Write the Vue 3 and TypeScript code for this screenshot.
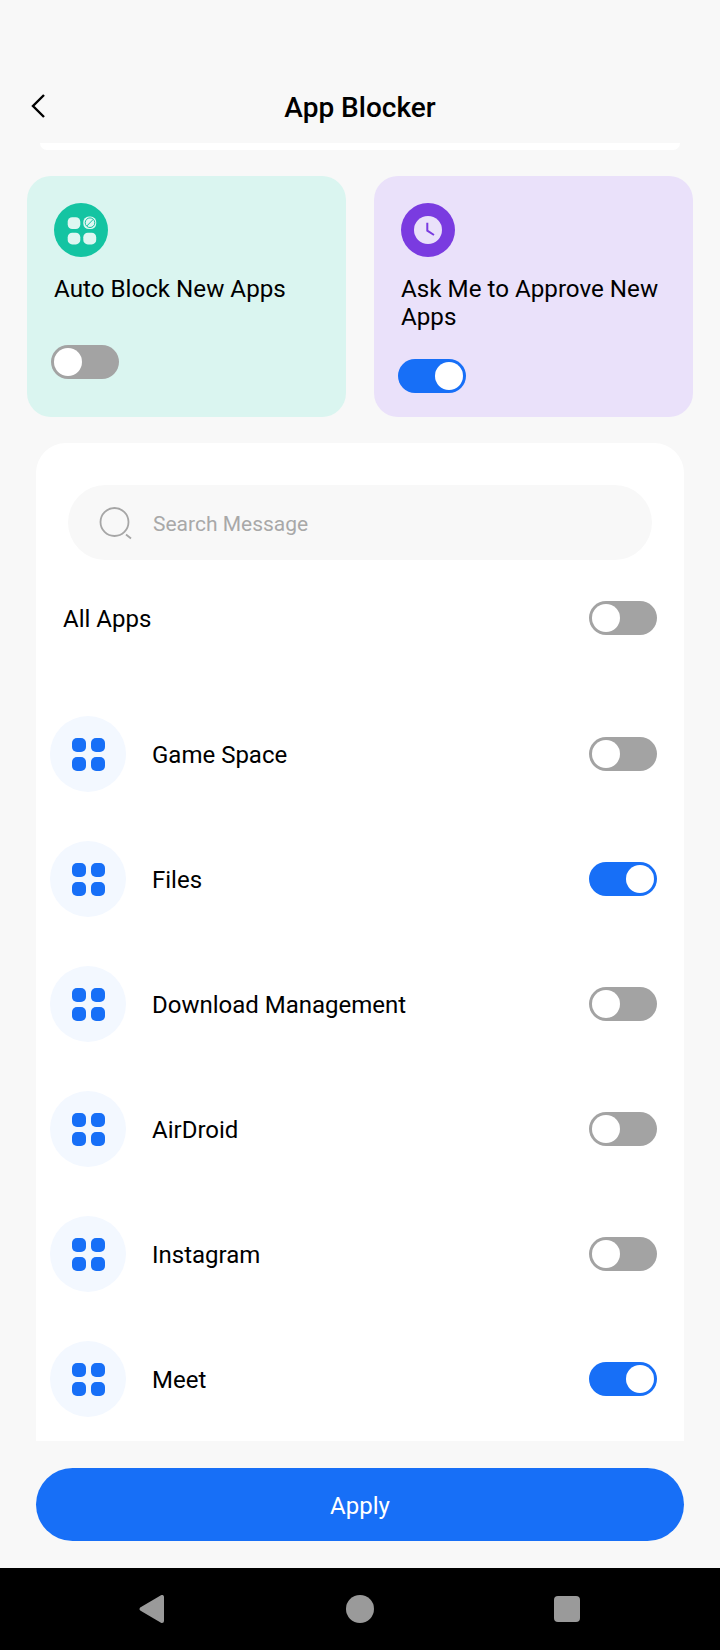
<script setup lang="ts">
import { ref } from 'vue'

interface AppRow {
  name: string
  on: boolean
}

const autoBlock = ref(false)
const askApprove = ref(true)
const allApps = ref(false)

const apps = ref<AppRow[]>([
  { name: 'Game Space', on: false },
  { name: 'Files', on: true },
  { name: 'Download Management', on: false },
  { name: 'AirDroid', on: false },
  { name: 'Instagram', on: false },
  { name: 'Meet', on: true }
])
</script>

<template>
  <div class="page">
    <header class="top-bar">
      <svg class="back" width="16" height="26" viewBox="0 0 16 26">
        <path d="M14 2 L3 13 L14 24" fill="none" stroke="#000" stroke-width="2.4" />
      </svg>
      <h1 class="title">App Blocker</h1>
    </header>
    <div class="strip"></div>

    <section class="cards">
      <div class="card card-green">
        <div class="badge badge-green">
          <svg width="34" height="34" viewBox="0 0 34 34">
            <rect x="3.7" y="4.3" width="12.6" height="11.7" rx="4.5" fill="#dff7f2" />
            <rect x="19.3" y="3.6" width="12.9" height="12.4" rx="5.5" fill="#dff7f2" />
            <rect x="3.7" y="19.7" width="12.6" height="11.7" rx="4.5" fill="#dff7f2" />
            <rect x="19.3" y="19.7" width="12.9" height="11.7" rx="4.5" fill="#dff7f2" />
            <circle cx="26" cy="9.7" r="4.8" fill="none" stroke="#14c4a2" stroke-width="1" />
            <path d="M22.8 13 L29.2 6.4" stroke="#14c4a2" stroke-width="1" />
          </svg>
        </div>
        <p class="card-text">Auto Block New Apps</p>
        <span class="toggle card-toggle" :class="{ on: autoBlock }"><i></i></span>
      </div>
      <div class="card card-purple">
        <div class="badge badge-purple">
          <svg width="28" height="28" viewBox="0 0 28 28">
            <circle cx="14" cy="14" r="14" fill="#eae1fa" />
            <path d="M13.3 6.7 V14.7 L20 19" fill="none" stroke="#7a3be0" stroke-width="2" />
          </svg>
        </div>
        <p class="card-text">Ask Me to Approve New Apps</p>
        <span class="toggle card-toggle" :class="{ on: askApprove }"><i></i></span>
      </div>
    </section>

    <section class="list">
      <div class="search">
        <svg width="36" height="36" viewBox="0 0 36 36">
          <circle cx="15.5" cy="17" r="14" fill="none" stroke="#a6a6a6" stroke-width="1.8" />
          <path d="M27 29.5 L32 33.5" stroke="#a6a6a6" stroke-width="1.8" />
        </svg>
        <span class="placeholder">Search Message</span>
      </div>

      <div class="all-row">
        <span class="row-name">All Apps</span>
        <span class="toggle" :class="{ on: allApps }"><i></i></span>
      </div>

      <div class="rows">
        <div v-for="app in apps" :key="app.name" class="app-row">
          <div class="app-icon">
            <span></span><span></span><span></span><span></span>
          </div>
          <span class="row-name app-name">{{ app.name }}</span>
          <span class="toggle" :class="{ on: app.on }"><i></i></span>
        </div>
      </div>
    </section>

    <button class="apply">Apply</button>

    <nav class="nav-bar">
      <svg width="26" height="30" viewBox="0 0 26 30">
        <path d="M23 2 V26 L2.6 14 Z" fill="#9a9a9a" stroke="#9a9a9a" stroke-width="4" stroke-linejoin="round" />
      </svg>
      <div class="nav-home"></div>
      <div class="nav-recent"></div>
    </nav>
  </div>
</template>

<style>
html,
body {
  margin: 0;
  background: #f8f8f8;
}
</style>

<style scoped>
.page {
  display: flex;
  flex-direction: column;
  width: 720px;
  height: 1650px;
  overflow: hidden;
  background: #f8f8f8;
  font-family: Roboto, "Liberation Sans", sans-serif;
  color: #000;
}

.top-bar {
  position: relative;
  display: flex;
  align-items: center;
  justify-content: center;
  height: 72px;
  padding-top: 71px;
  flex-shrink: 0;
}

.back {
  position: absolute;
  left: 30px;
  top: 93px;
}

.title {
  margin: 0;
  font-size: 28px;
  font-weight: 500;
}

.strip {
  height: 7px;
  margin: 0 40px;
  background: #fff;
  border-radius: 0 0 20px 20px;
  flex-shrink: 0;
}

.cards {
  display: grid;
  grid-template-columns: 319px 319px;
  gap: 28px;
  margin: 26px 0 0 27px;
}

.card {
  display: flex;
  flex-direction: column;
  align-items: flex-start;
  height: 241px;
  box-sizing: border-box;
  padding: 27px 27px 0;
  border-radius: 24px;
}

.card-green {
  background: #daf5f0;
}

.card-purple {
  background: #eae1fa;
}

.badge {
  display: flex;
  align-items: center;
  justify-content: center;
  width: 54px;
  height: 54px;
  border-radius: 50%;
}

.badge-green {
  background: #14c4a2;
}

.badge-purple {
  background: #7a3be0;
}

.card-text {
  margin: 18px 0 0;
  font-size: 24.2px;
  line-height: 28px;
}

.card-green .card-toggle {
  margin-top: 42px;
}

.card-purple .card-toggle {
  margin-top: 28px;
}

.card-toggle {
  margin-left: -3px;
}

.toggle {
  display: flex;
  flex-shrink: 0;
  box-sizing: border-box;
  width: 68px;
  height: 34px;
  padding: 3px;
  border-radius: 17px;
  background: #a3a3a3;
}

.toggle i {
  display: block;
  width: 28px;
  height: 28px;
  border-radius: 50%;
  background: #fff;
}

.toggle.on {
  justify-content: flex-end;
  background: #176ff7;
}

.list {
  height: 998px;
  margin: 26px 36px 0;
  overflow: hidden;
  background: #fff;
  border-radius: 30px 30px 0 0;
  flex-shrink: 0;
}

.search {
  display: flex;
  align-items: center;
  gap: 18px;
  height: 75px;
  box-sizing: border-box;
  margin: 42px 32px 0;
  padding-left: 31px;
  background: #f8f8f8;
  border-radius: 38px;
}

.placeholder {
  padding-top: 2px;
  font-size: 21px;
  color: #a8a8a8;
}

.all-row {
  display: flex;
  align-items: center;
  justify-content: space-between;
  margin: 41px 27px 0;
  height: 34px;
}

.row-name {
  padding-top: 2px;
  font-size: 24px;
}

.rows {
  display: flex;
  flex-direction: column;
  gap: 49px;
  margin-top: 81px;
}

.app-row {
  display: flex;
  align-items: center;
  height: 76px;
  padding: 0 27px 0 14px;
}

.app-name {
  flex: 1;
  margin-left: 26px;
}

.app-icon {
  display: grid;
  grid-template-columns: 14px 14px;
  grid-auto-rows: 14px;
  gap: 5px;
  align-content: center;
  justify-content: center;
  width: 76px;
  height: 76px;
  border-radius: 50%;
  background: #f3f8ff;
}

.app-icon span {
  background: #176ff7;
  border-radius: 5px;
}

.apply {
  display: block;
  width: 648px;
  height: 73px;
  margin: 27px 36px 0;
  padding: 3px 0 0;
  border: 0;
  border-radius: 37px;
  background: #176ff7;
  color: #fff;
  font-family: inherit;
  font-size: 24px;
  flex-shrink: 0;
}

.nav-bar {
  position: relative;
  display: flex;
  align-items: center;
  justify-content: center;
  height: 82px;
  margin-top: 27px;
  background: #000;
  flex-shrink: 0;
}

.nav-bar svg {
  position: absolute;
  left: 139px;
  top: 27px;
}

.nav-home {
  width: 28px;
  height: 28px;
  border-radius: 50%;
  background: #9a9a9a;
}

.nav-recent {
  position: absolute;
  left: 554px;
  top: 28px;
  width: 26px;
  height: 26px;
  border-radius: 4px;
  background: #9a9a9a;
}
</style>
